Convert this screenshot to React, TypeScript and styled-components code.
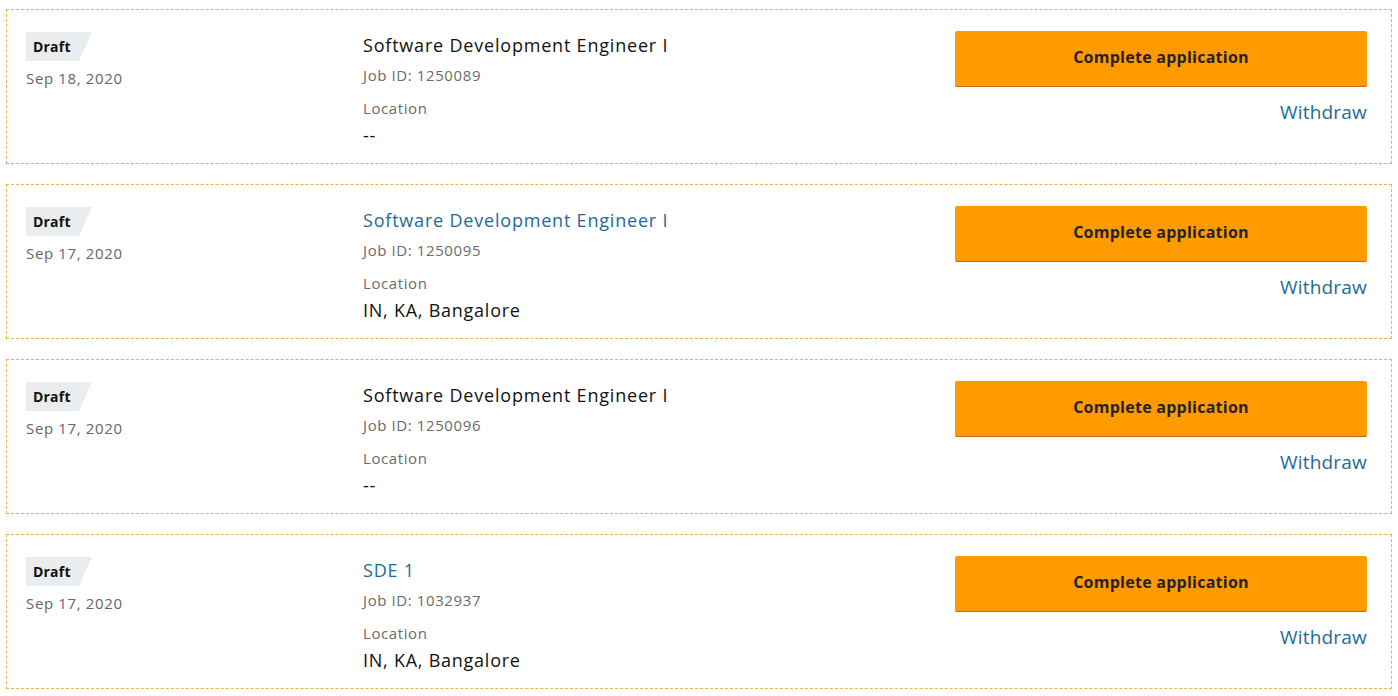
import React from "react";
import styled, { createGlobalStyle } from "styled-components";

const Global = createGlobalStyle`
  html, body { margin: 0; padding: 0; background: #fff; }
  body { font-family: "Open Sans", "Noto Sans", Arial, sans-serif; color: #111; }
`;

const List = styled.div`
  display: flex;
  flex-direction: column;
  gap: 20px;
  padding: 9px 6px 0 6px;
`;

const Card = styled.div`
  box-sizing: border-box;
  height: 155px;
  border: 1px dashed #e8b34d;
  display: grid;
  grid-template-columns: 337px 1fr 412px;
  padding: 22px 24px 0 19px;
`;

const LeftCol = styled.div`
  display: flex;
  flex-direction: column;
  align-items: flex-start;
`;

const Badge = styled.div`
  box-sizing: border-box;
  width: 66px;
  height: 29px;
  padding-left: 7px;
  background: #eaedf0;
  clip-path: polygon(0 0, 100% 0, calc(100% - 13px) 100%, 0 100%);
  font-size: 14px;
  font-weight: 700;
  line-height: 29px;
  letter-spacing: 0.2px;
  color: #111;
`;

const DateText = styled.div`
  margin-top: 7px;
  font-size: 15px;
  line-height: 20px;
  letter-spacing: 0.65px;
  color: #666;
`;

const MidCol = styled.div`
  display: flex;
  flex-direction: column;
  padding-top: 1px;
`;

const Title = styled.div<{ $link?: boolean }>`
  font-size: 18px;
  line-height: 24px;
  letter-spacing: 0.8px;
  color: ${(p) => (p.$link ? "#1f6b98" : "#111")};
`;

const Meta = styled.div<{ $gap: number }>`
  margin-top: ${(p) => p.$gap}px;
  font-size: 15px;
  line-height: 20px;
  letter-spacing: 0.6px;
  color: #6b6b6b;
`;

const Value = styled.div`
  margin-top: 5px;
  font-size: 18px;
  line-height: 24px;
  letter-spacing: 0.75px;
  color: #111;
`;

const RightCol = styled.div`
  display: flex;
  flex-direction: column;
  align-items: flex-end;
  margin-top: -1px;
`;

const Button = styled.button`
  box-sizing: border-box;
  width: 100%;
  height: 56px;
  padding: 0 0 4px 0;
  border: none;
  border-bottom: 1px solid #c86a10;
  border-radius: 2px;
  background: #ff9a00;
  font-family: inherit;
  font-size: 16px;
  font-weight: 700;
  letter-spacing: 0.25px;
  color: #232323;
  cursor: pointer;
`;

const Withdraw = styled.a`
  margin-top: 13px;
  font-size: 19px;
  line-height: 24px;
  letter-spacing: 0.2px;
  color: #1f6b98;
  text-decoration: none;
  cursor: pointer;
`;

type Job = { date: string; title: string; link: boolean; id: string; location: string };

const jobs: Job[] = [
  { date: "Sep 18, 2020", title: "Software Development Engineer I", link: false, id: "1250089", location: "--" },
  { date: "Sep 17, 2020", title: "Software Development Engineer I", link: true, id: "1250095", location: "IN, KA, Bangalore" },
  { date: "Sep 17, 2020", title: "Software Development Engineer I", link: false, id: "1250096", location: "--" },
  { date: "Sep 17, 2020", title: "SDE 1", link: true, id: "1032937", location: "IN, KA, Bangalore" },
];

export default function App() {
  return (
    <>
      <Global />
      <List>
        {jobs.map((j, i) => (
          <Card key={i}>
            <LeftCol>
              <Badge>Draft</Badge>
              <DateText>{j.date}</DateText>
            </LeftCol>
            <MidCol>
              <Title $link={j.link}>{j.title}</Title>
              <Meta $gap={8}>Job ID: {j.id}</Meta>
              <Meta $gap={13}>Location</Meta>
              <Value>{j.location}</Value>
            </MidCol>
            <RightCol>
              <Button>Complete application</Button>
              <Withdraw>Withdraw</Withdraw>
            </RightCol>
          </Card>
        ))}
      </List>
    </>
  );
}
